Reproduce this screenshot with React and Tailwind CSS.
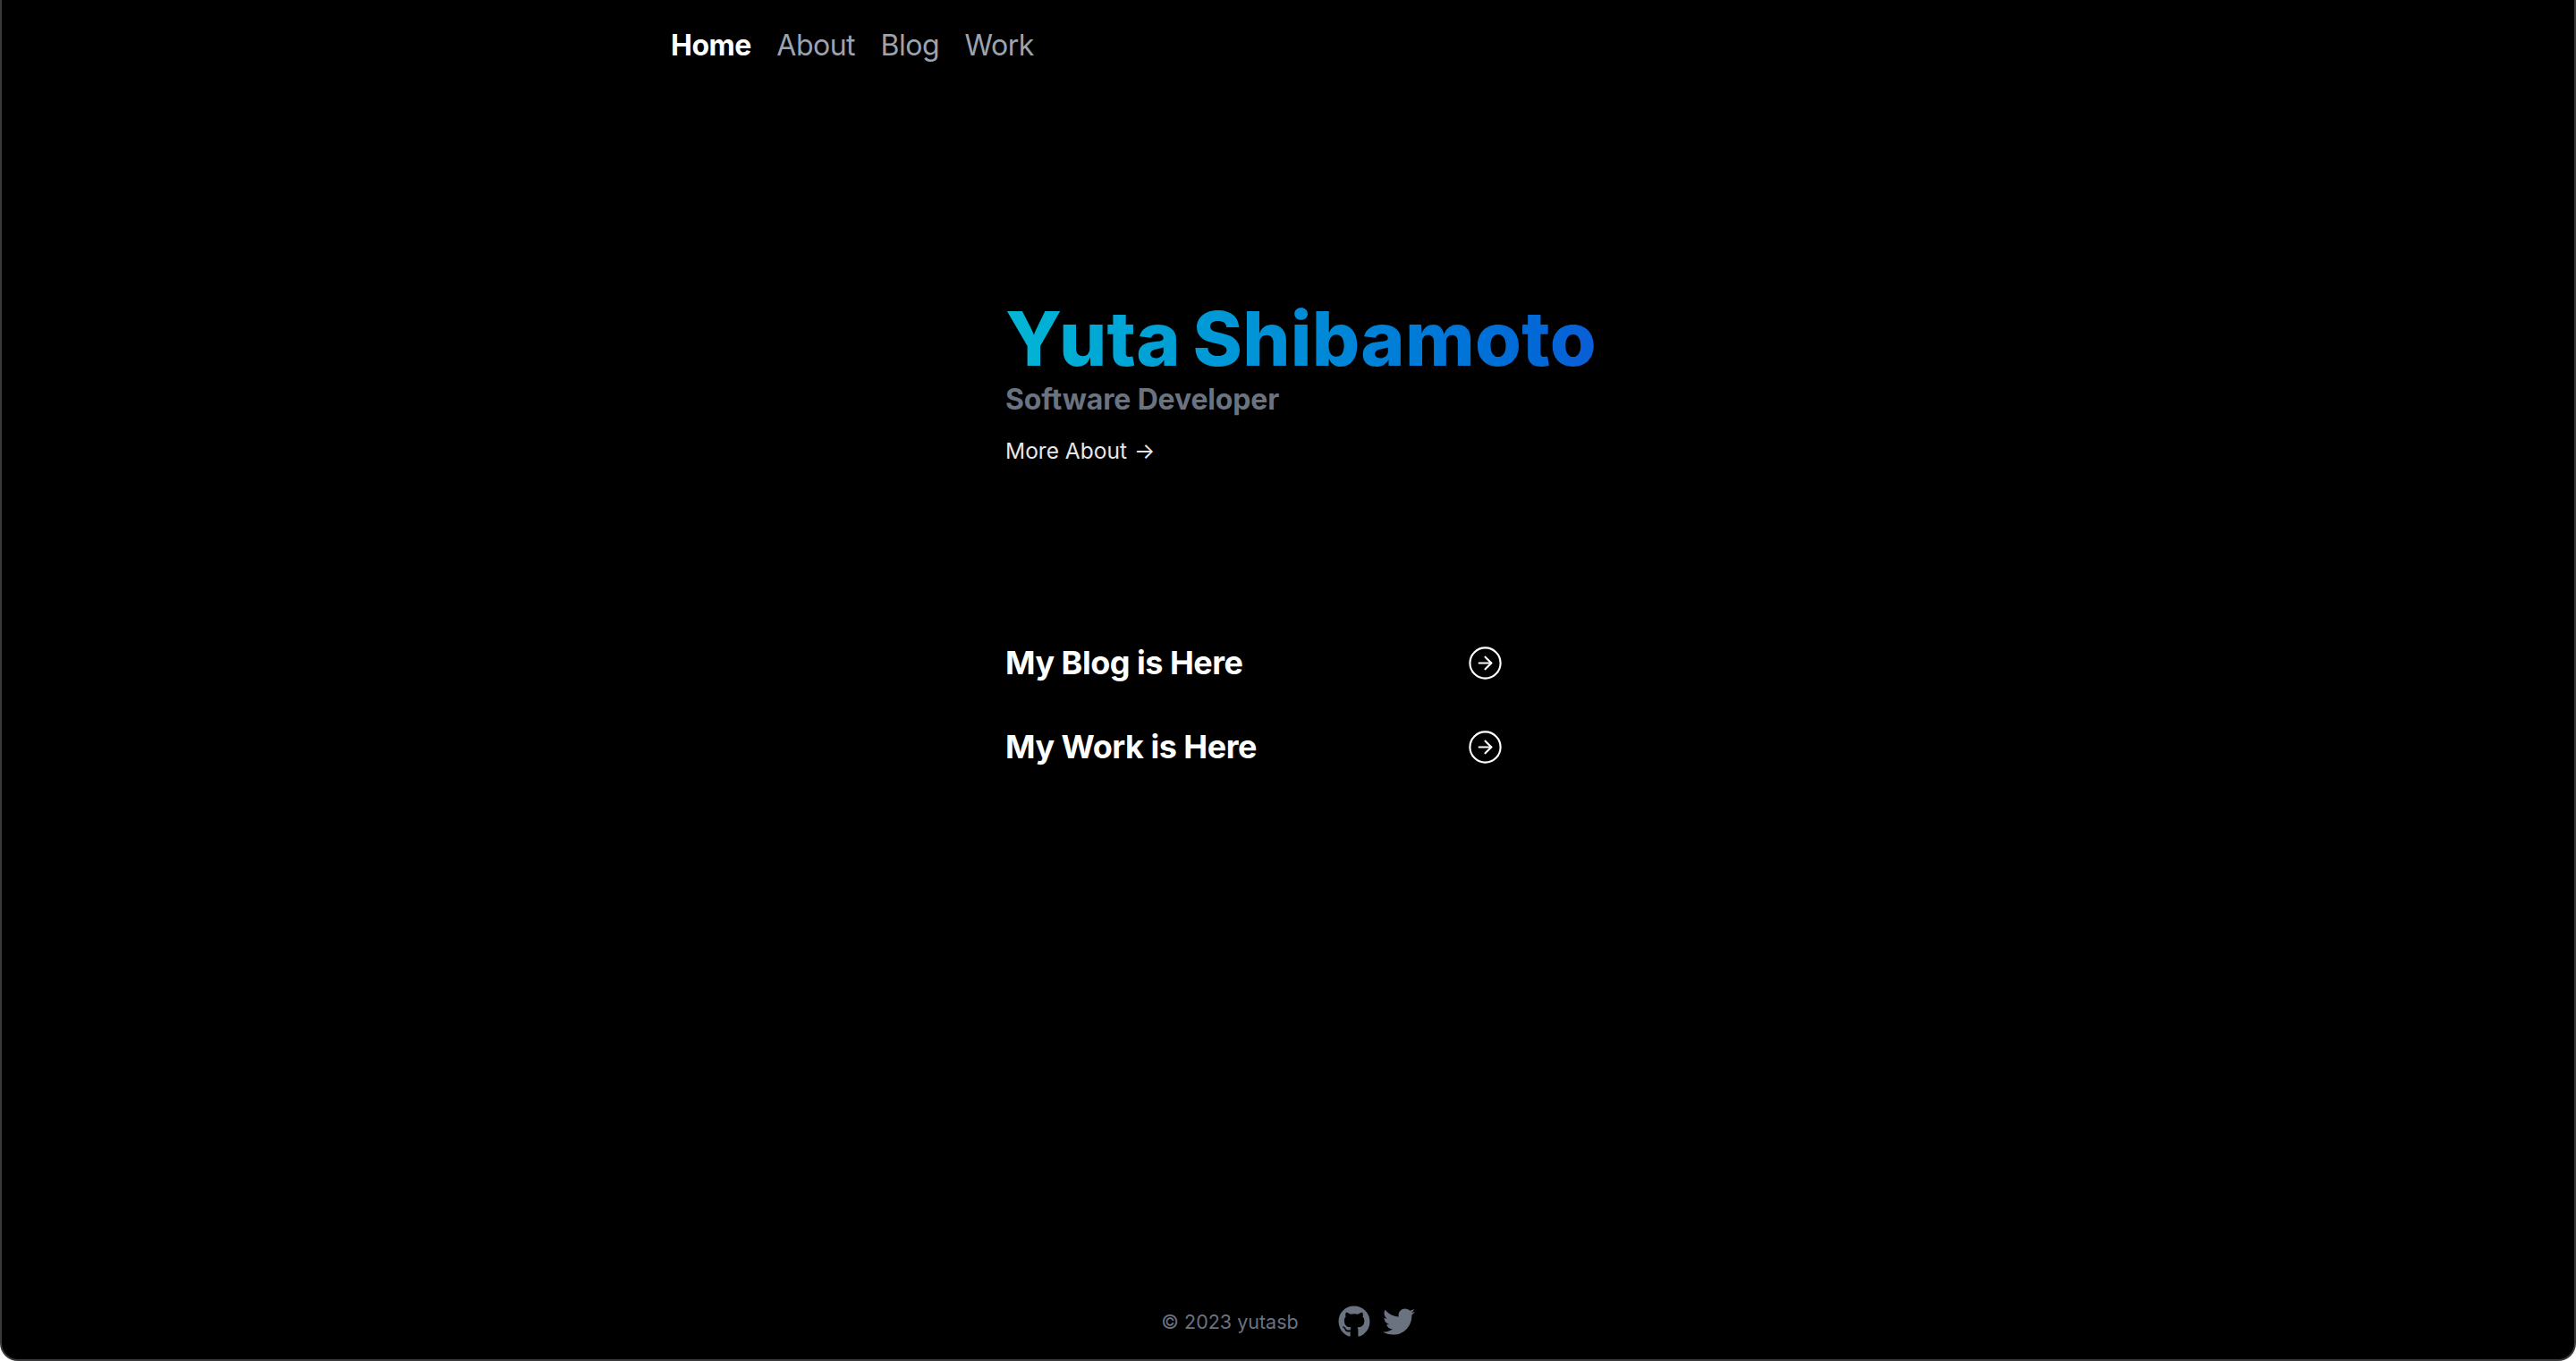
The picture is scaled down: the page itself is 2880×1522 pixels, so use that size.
import { CircleArrowRight } from 'lucide-react';
import { FaGithub, FaTwitter } from 'react-icons/fa';

const navItems = ['About', 'Blog', 'Work'];

function LinkRow({ label }) {
  return (
    <a className="flex h-[94px] w-[557px] items-center justify-between text-[36px] font-bold tracking-[-0.5px] text-white">
      <span>{label}</span>
      <CircleArrowRight className="size-[41px]" strokeWidth={1.25} />
    </a>
  );
}

export default function App() {
  return (
    <div className="flex h-[1522px] flex-col rounded-b-[20px] border-x-2 border-b-2 border-[#3a3a3c] bg-black font-['Inter',sans-serif]">
      <nav className="flex h-[102px] items-center gap-[28.5px] pl-[748px] text-[32px] leading-none tracking-[-0.5px] text-[#9ca3af]">
        <a className="font-bold text-white">Home</a>
        {navItems.map((item) => (
          <a key={item}>{item}</a>
        ))}
      </nav>

      <main className="flex-1 pl-[1122px] pt-[229px]">
        <h1 className="w-fit bg-gradient-to-r from-[#06b6d4] to-[#0a5ed7] bg-clip-text text-[84px] font-extrabold leading-[96px] tracking-[0.2px] text-transparent [word-spacing:-5px]">
          Yuta Shibamoto
        </h1>
        <p className="text-[32px] font-bold leading-[40px] tracking-[-0.15px] text-[#6b7280]">Software Developer</p>
        <a className="mt-[19px] flex items-center gap-2 text-[24.5px] leading-[36px] text-gray-200">
          More About <span>→</span>
        </a>
        <div className="mt-[172px] flex flex-col">
          <LinkRow label="My Blog is Here" />
          <LinkRow label="My Work is Here" />
        </div>
      </main>

      <footer className="flex h-[84px] items-center justify-center gap-[44px] text-[21.5px] text-[#6b7280]">
        <span>© 2023 yutasb</span>
        <div className="flex items-center gap-[14px] text-[36px]">
          <FaGithub />
          <FaTwitter />
        </div>
      </footer>
    </div>
  );
}
